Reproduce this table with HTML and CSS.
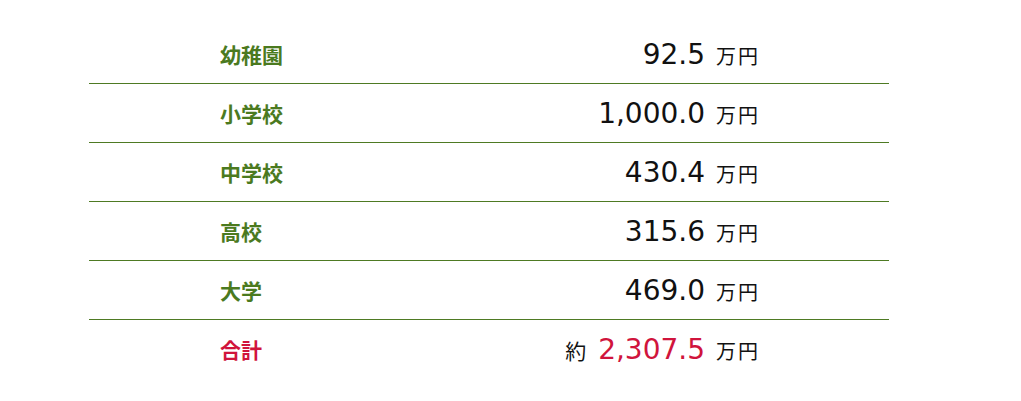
FILE: index.html
```html
<!DOCTYPE html>
<html lang="ja">
<head>
<meta charset="utf-8">
<link rel="stylesheet" href="styles.css">
</head>
<body>
<div class="table">
  <div class="row"><div class="label">幼稚園</div><div class="value"><span class="num">92.5</span><span class="unit">万円</span></div></div>
  <div class="row"><div class="label">小学校</div><div class="value"><span class="num">1,000.0</span><span class="unit">万円</span></div></div>
  <div class="row"><div class="label">中学校</div><div class="value"><span class="num">430.4</span><span class="unit">万円</span></div></div>
  <div class="row"><div class="label">高校</div><div class="value"><span class="num">315.6</span><span class="unit">万円</span></div></div>
  <div class="row"><div class="label">大学</div><div class="value"><span class="num">469.0</span><span class="unit">万円</span></div></div>
  <div class="row total"><div class="label">合計</div><div class="value"><span class="approx">約</span><span class="num">2,307.5</span><span class="unit">万円</span></div></div>
</div>
</body>
</html>
```
FILE: styles.css
```css
body {
  margin: 0;
  background: #fff;
  font-family: "DejaVu Sans", "Noto Sans CJK JP", sans-serif;
}
.table {
  width: 800px;
  margin: 25px 0 0 89px;
}
.row {
  display: flex;
  justify-content: space-between;
  align-items: center;
  height: 58px;
  padding: 0 131px 0 131px;
  border-bottom: 1px solid #4e7a23;
}
.row.total {
  border-bottom: none;
}
.label {
  font-family: "Noto Sans CJK JP", sans-serif;
  font-weight: bold;
  font-size: 21px;
  color: #4b7a1f;
}
.total .label {
  color: #d0143c;
}
.value {
  display: flex;
  align-items: baseline;
  color: #111;
}
.num {
  font-size: 28px;
}
.total .num {
  color: #d0143c;
}
.unit {
  font-family: "Noto Sans CJK JP", sans-serif;
  font-size: 20px;
  letter-spacing: 2px;
  margin-left: 11px;
  margin-right: -2px;
}
.approx {
  font-family: "Noto Sans CJK JP", sans-serif;
  font-size: 21px;
  margin-right: 12px;
}
```
